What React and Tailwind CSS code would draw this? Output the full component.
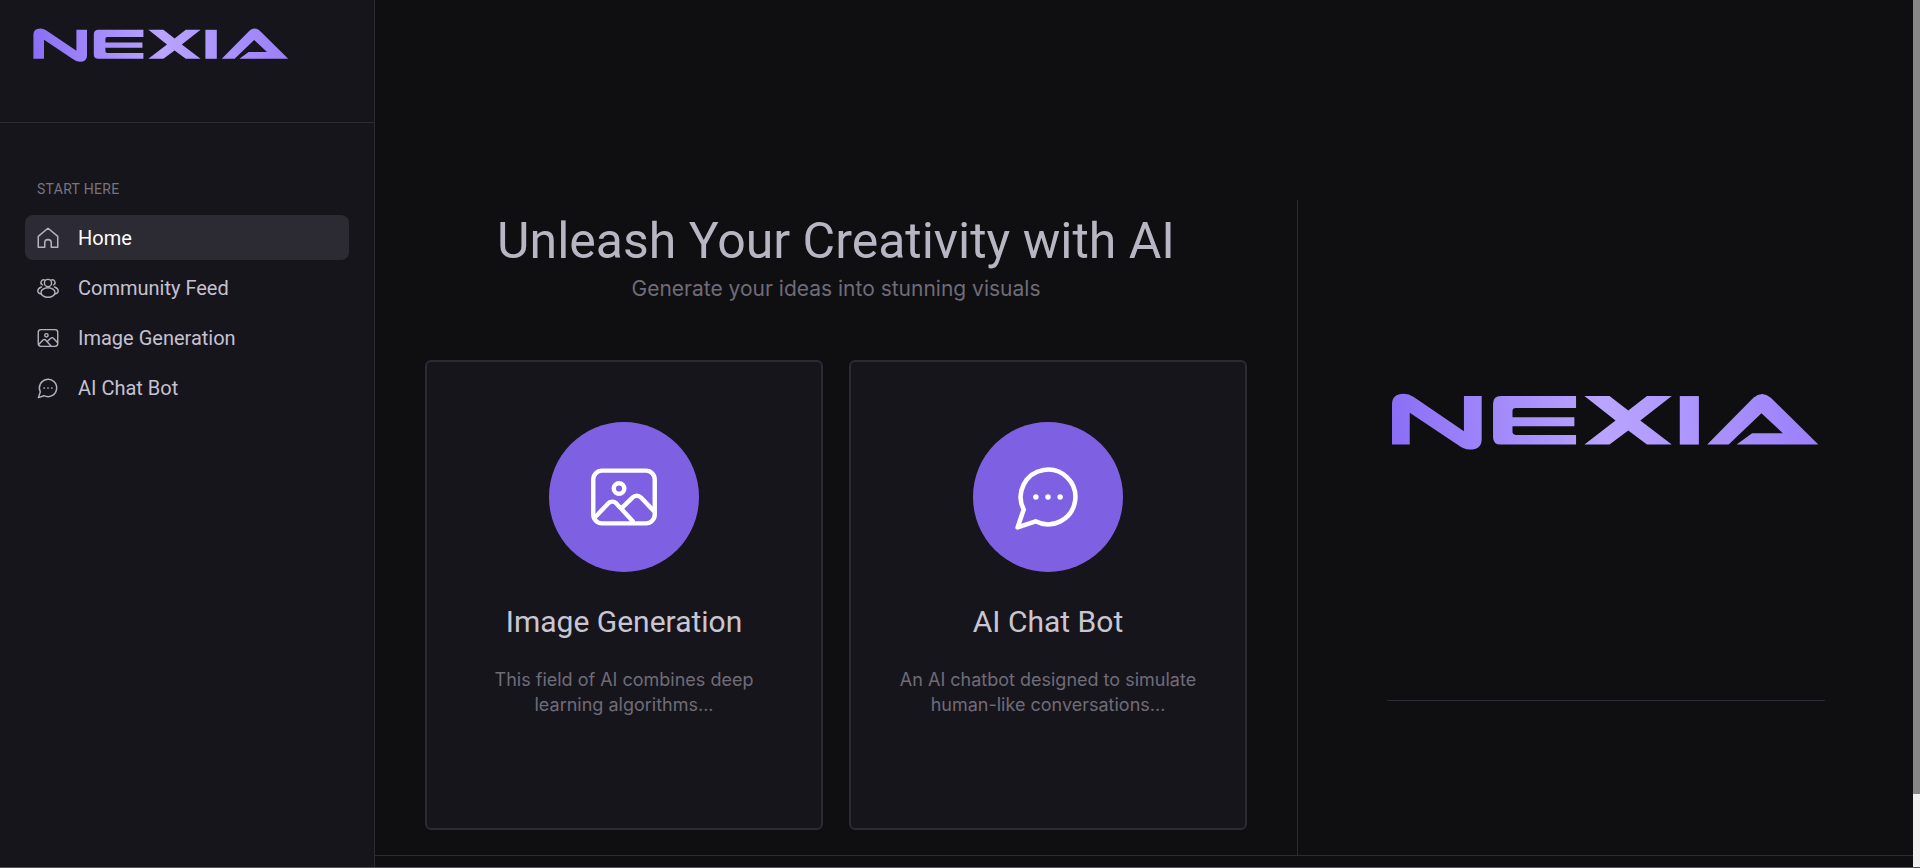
function Logo({ className, id }) {
  return (
    <svg viewBox="70 68 1276 170" className={className}>
      <defs>
        <linearGradient id={id} gradientUnits="userSpaceOnUse" x1="70" y1="200" x2="1346" y2="100">
          <stop offset="0" stopColor="#8a6ef6" />
          <stop offset="0.5" stopColor="#b9a4ff" />
          <stop offset="1" stopColor="#9a7ffa" />
        </linearGradient>
      </defs>
      <g fill={`url(#${id})`}>
        <path d="M70 222V102Q70 70 105 70Q120 70 135 80L285 182V77H338V205Q338 237 302 237Q285 237 265 222L123 127V222Z" />
        <path d="M372 100Q372 77 395 77H620V113H440Q430 113 430 122V140H615V167H430V184Q430 193 440 193H620V222H395Q372 222 372 200Z" />
        <path d="M645 77H720L776 120L832 77H906L812 150L906 222H832L776 180L720 222H645L738 150Z" />
        <rect x="930" y="77" width="57" height="145" />
        <path d="M1012 222L1150 82Q1176 60 1202 82L1344 222H1100L1146 188H1238L1174 128L1076 222Z" />
      </g>
    </svg>
  )
}

function HomeIcon({ className }) {
  return (
    <svg viewBox="0 0 24 24" fill="none" stroke="currentColor" strokeWidth="1.4" strokeLinecap="round" strokeLinejoin="round" className={className}>
      <path d="M3 20.5V10.5L12 3l9 7.5v10h-6v-4a3 3 0 0 0-6 0v4Z" />
    </svg>
  )
}

function CommunityIcon({ className }) {
  return (
    <svg viewBox="-1 -1 26 26" fill="none" stroke="currentColor" strokeWidth="1.4" strokeLinecap="round" strokeLinejoin="round" className={className}>
      <circle cx="12" cy="7" r="3.6" />
      <path d="M6.5 9A2.6 2.6 0 1 1 9 4.1" />
      <path d="M17.5 9A2.6 2.6 0 1 0 15 4.1" />
      <path d="M5.5 11C3.2 11.8 1.8 13.3 1.8 15.1c0 1.5 1.6 2.6 3.6 2.9" />
      <path d="M18.5 11c2.3.8 3.7 2.3 3.7 4.1 0 1.5-1.6 2.6-3.6 2.9" />
      <ellipse cx="12" cy="16.5" rx="7" ry="4.8" />
    </svg>
  )
}

function GalleryIcon({ className }) {
  return (
    <svg viewBox="-2 -2 28 28" fill="none" stroke="currentColor" strokeWidth="1.5" strokeLinecap="round" strokeLinejoin="round" className={className}>
      <rect x="1.5" y="3" width="21" height="18" rx="3" />
      <circle cx="10.3" cy="9.1" r="1.8" />
      <path d="M2.2 18.8l4.4-4.6a2 2 0 0 1 2.8 0l5.6 6.1" />
      <path d="M11.2 15.8l3.7-3.6a2 2 0 0 1 2.9 0l4.4 4.6" />
    </svg>
  )
}

function ChatIcon({ className }) {
  return (
    <svg viewBox="-1.5 -1.5 27 27" fill="none" stroke="currentColor" strokeWidth="1.5" strokeLinecap="round" strokeLinejoin="round" className={className}>
      <path d="M7.9 20A9 9 0 1 0 4 16.1L2 22Z" />
      <circle cx="8" cy="12" r="0.9" fill="currentColor" stroke="none" />
      <circle cx="12" cy="12" r="0.9" fill="currentColor" stroke="none" />
      <circle cx="16" cy="12" r="0.9" fill="currentColor" stroke="none" />
    </svg>
  )
}

const navItems = [
  { label: 'Home', icon: HomeIcon, active: true },
  { label: 'Community Feed', icon: CommunityIcon },
  { label: 'Image Generation', icon: GalleryIcon },
  { label: 'AI Chat Bot', icon: ChatIcon },
]

function Sidebar() {
  return (
    <aside className="flex w-[375px] shrink-0 flex-col border-r border-[#2c2a33] bg-[#17151c]">
      <div className="h-[123px] border-b border-[#2c2a33] pl-[33px] pt-[28px]">
        <Logo id="logo-small" className="h-[34px] w-[256px]" />
      </div>
      <nav className="flex flex-col px-[25px] pt-[59px]">
        <p className="mb-[18px] pl-[12px] font-['Roboto',sans-serif] text-[14px] leading-[15px] tracking-[0.3px] text-[#77737f]">
          START HERE
        </p>
        <div className="flex flex-col gap-[5px]">
          {navItems.map(({ label, icon: Icon, active }) => (
            <div
              key={label}
              className={
                active
                  ? 'flex h-[45px] items-center gap-[17px] rounded-lg bg-[#2c2a32] pl-[10px] text-white'
                  : 'flex h-[45px] items-center gap-[17px] rounded-lg pl-[10px] text-[#c5c1d2]'
              }
            >
              <Icon className="h-[26px] w-[26px] text-[#b5b2bf]" />
              <span className="font-['Roboto',sans-serif] text-[20px] leading-none">{label}</span>
            </div>
          ))}
        </div>
      </nav>
    </aside>
  )
}

function FeatureCard({ icon: Icon, title, text }) {
  return (
    <div className="flex h-[470px] w-[398px] flex-col items-center rounded-md border-2 border-[#2c2a33] bg-[#17151c] px-[40px] pt-[60px]">
      <div className="flex h-[150px] w-[150px] items-center justify-center rounded-full bg-[#7e60e2]">
        <Icon className="h-[82px] w-[82px] text-white" />
      </div>
      <h3 className="mt-[33px] text-center font-['Roboto',sans-serif] text-[30px] leading-[34px] text-[#c9c6d3]">{title}</h3>
      <p className="mt-[28px] text-center font-['Inter',sans-serif] text-[18px] leading-[25px] text-[#6f6c78]">{text}</p>
    </div>
  )
}

export default function App() {
  return (
    <div className="flex h-[868px] flex-col overflow-hidden bg-[#0f0f12]">
      <div className="flex min-h-0 flex-1">
        <Sidebar />
        <main className="flex min-w-0 flex-1 flex-col">
          <div className="flex min-h-0 flex-1 border-b border-[#2c2a33] pt-[200px]">
            <section className="flex w-[923px] shrink-0 flex-col items-center border-r border-[#2c2a33] px-[50px] pt-[12px]">
              <h1 className="font-['Roboto',sans-serif] text-[50px] leading-[58px] text-[#b9b6c3]">Unleash Your Creativity with AI</h1>
              <p className="mt-[5px] font-['Inter',sans-serif] text-[21px] leading-[28px] text-[#6f6c78]">Generate your ideas into stunning visuals</p>
              <div className="mt-[57px] flex gap-[26px]">
                <FeatureCard
                  icon={GalleryIcon}
                  title="Image Generation"
                  text="This field of AI combines deep learning algorithms..."
                />
                <FeatureCard
                  icon={ChatIcon}
                  title="AI Chat Bot"
                  text="An AI chatbot designed to simulate human-like conversations..."
                />
              </div>
            </section>
            <section className="flex flex-1 flex-col items-center pt-[193px]">
              <Logo id="logo-large" className="h-[57px] w-[427px]" />
              <div className="mt-[250px] h-px w-[438px] bg-[#2c2a33]" />
            </section>
          </div>
          <div className="h-[11px]" />
        </main>
        <div className="flex w-[7px] shrink-0 flex-col bg-[#f1f1f1]">
          <div className="h-[794px] bg-[#888888]" />
        </div>
      </div>
      <div className="h-px bg-[#55555a]" />
    </div>
  )
}
